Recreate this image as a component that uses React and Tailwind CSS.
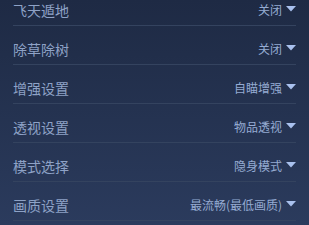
import React from "react";

const rows = [
  ["飞天遁地", "关闭"],
  ["除草除树", "关闭"],
  ["增强设置", "自瞄增强"],
  ["透视设置", "物品透视"],
  ["模式选择", "隐身模式"],
  ["画质设置", "最流畅(最低画质)"],
];

export default function App() {
  return (
    <div
      className="w-[309px] h-[225px] overflow-hidden bg-gradient-to-b from-[#1e2a44] to-[#2b3b5d]"
      style={{ fontFamily: '"Noto Sans CJK SC", "Noto Sans", sans-serif' }}
    >
      <div className="mt-[-13px] pl-[13px] pr-[13px]">
        {rows.map(([l, r], i) => (
          <div
            key={i}
            className="h-[39px] flex items-end justify-between pb-[5px] border-b border-[#34435f]"
          >
            <span className="text-[14px] leading-[20px] text-[#8ea2c6]">{l}</span>
            <span className="flex items-center gap-[4px] text-[12px] leading-[20px] text-[#95abd2]">
              {r}
              <svg width="10" height="6" viewBox="0 0 10 6" className="mt-[-2px]">
                <polygon points="0,0 10,0 5,5.5" fill="#a9c1ee" />
              </svg>
            </span>
          </div>
        ))}
      </div>
    </div>
  );
}
